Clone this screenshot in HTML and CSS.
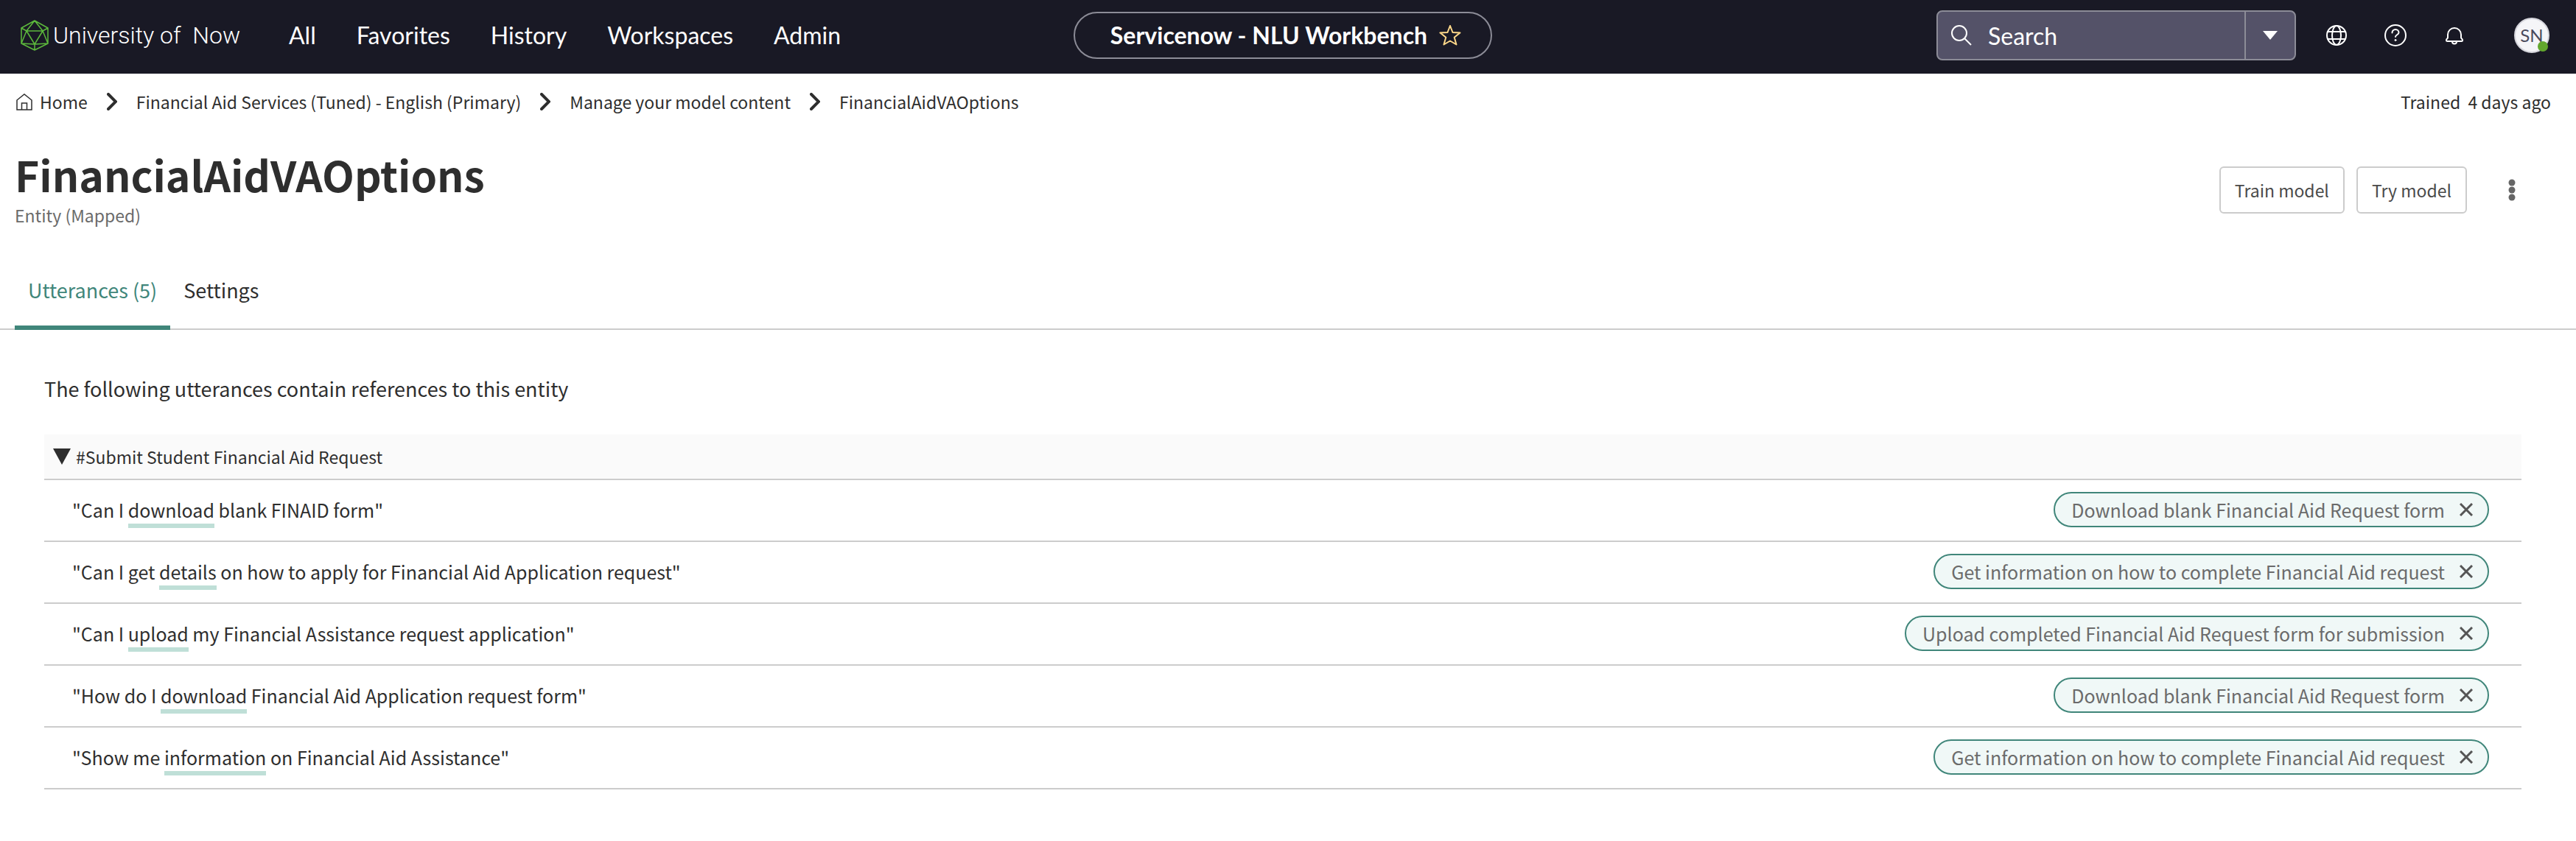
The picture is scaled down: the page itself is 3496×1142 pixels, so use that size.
FILE: index.html
```html
<!DOCTYPE html>
<html lang="en">
<head>
<meta charset="utf-8">
<title>FinancialAidVAOptions - NLU Workbench</title>
<link rel="stylesheet" href="styles.css">
</head>
<body>
<header class="topbar">
  <a class="brand" href="#">
    <svg class="brand-icon" viewBox="0 0 38 42" aria-hidden="true"><path d="M19 1 37 11V32L19 41 1 32V11ZM8 15H30L19 33ZM19 1 8 15 1 11M19 1 30 15 37 11M8 15 1 32 19 33 37 32 30 15M19 33V41"/></svg>
    <span>University of&nbsp; Now</span>
  </a>
  <nav class="menu" aria-label="Main">
    <a href="#">All</a><a href="#">Favorites</a><a href="#">History</a><a href="#">Workspaces</a><a href="#">Admin</a>
  </nav>
  <div class="context">
    <span>Servicenow - NLU Workbench</span>
    <button class="icon-button" type="button" aria-label="Add to favorites"><svg class="star" viewBox="0 0 30 28" aria-hidden="true"><path d="M15 1 18.500 10 28.500 10.500 20.700 16.800 23.500 26.500 15 21.500 6.500 26.500 9.300 16.800 1.500 10.500 11.500 10Z"/></svg></button>
  </div>
  <div class="tools">
    <div class="search">
      <svg class="search-icon" viewBox="0 0 28 28" aria-hidden="true"><circle cx="11" cy="11" r="10"/><path d="M18 18 27 27"/></svg>
      <input type="text" placeholder="Search" aria-label="Search">
      <button class="search-scope" type="button" aria-label="Search scope"><svg viewBox="0 0 20 12" aria-hidden="true"><path d="M0 0H20L10 12Z"/></svg></button>
    </div>
    <button class="icon-button" type="button" aria-label="Language"><svg class="tool-icon" viewBox="0 0 30 30" aria-hidden="true"><circle cx="15" cy="15" r="13"/><ellipse cx="15" cy="15" rx="6" ry="13"/><path d="M3 10H27M3 20H27"/></svg></button>
    <button class="icon-button" type="button" aria-label="Help"><svg class="tool-icon" viewBox="0 0 30 30" aria-hidden="true"><circle cx="15" cy="15" r="14"/><path d="M10.500 11.500C10.500 9 12.500 7 15 7S19.500 9 19.500 11.200C19.500 14 15 14.500 15 17"/><circle class="dot" cx="15" cy="21.500" r="1"/></svg></button>
    <button class="icon-button" type="button" aria-label="Notifications"><svg class="tool-icon" viewBox="0 0 30 30" aria-hidden="true"><path d="M6 18V14A9 9 0 0 1 24 14V18C24 19.500 26 19.500 26 21.500C26 22.500 25.500 23 24.500 23H5.500C4.500 23 4 22.500 4 21.500C4 19.500 6 19.500 6 18ZM12 23.500A3 3 0 0 0 18 23.500"/></svg></button>
    <button class="avatar" type="button" aria-label="User menu">SN<span class="presence"></span></button>
  </div>
</header>
<main>
  <div class="crumb-row">
    <nav class="crumbs" aria-label="Breadcrumb">
      <a class="home" href="#"><svg class="home-icon" viewBox="0 0 22 24" aria-hidden="true"><path d="M1 10 11 2 21 10V23H1ZM7.500 23V14H14.500V23"/></svg>Home</a>
      <svg class="chevron" viewBox="0 0 14 24" aria-hidden="true"><path d="M2 2 12 12 2 22"/></svg>
      <a href="#">Financial Aid Services (Tuned) - English (Primary)</a>
      <svg class="chevron" viewBox="0 0 14 24" aria-hidden="true"><path d="M2 2 12 12 2 22"/></svg>
      <a href="#">Manage your model content</a>
      <svg class="chevron" viewBox="0 0 14 24" aria-hidden="true"><path d="M2 2 12 12 2 22"/></svg>
      <span>FinancialAidVAOptions</span>
    </nav>
    <span>Trained&nbsp; 4 days ago</span>
  </div>
  <div class="title-row">
    <div>
      <h1>FinancialAidVAOptions</h1>
      <p class="subtitle">Entity (Mapped)</p>
    </div>
    <div class="actions">
      <button class="button" type="button">Train model</button>
      <button class="button" type="button">Try model</button>
      <button class="more" type="button" aria-label="More options"><svg viewBox="0 0 10 30" aria-hidden="true"><circle cx="5" cy="5" r="4.500"/><circle cx="5" cy="15" r="4.500"/><circle cx="5" cy="25" r="4.500"/></svg></button>
    </div>
  </div>
  <div class="tabs" role="tablist">
    <button class="tab selected" type="button" role="tab" aria-selected="true">Utterances (5)</button>
    <button class="tab" type="button" role="tab" aria-selected="false">Settings</button>
  </div>
  <section class="panel">
    <h2>The following utterances contain references to this entity</h2>
    <table>
      <thead><tr><th colspan="2"><button class="group" type="button" aria-expanded="true"><svg viewBox="0 0 24 22" aria-hidden="true"><path d="M0 0H24L12 22Z"/></svg>#Submit Student Financial Aid Request</button></th></tr></thead>
      <tbody>
        <tr><td>"Can I <mark>download</mark> blank FINAID form"</td><td><span class="tag">Download blank Financial Aid Request form<button type="button" aria-label="Remove"><svg viewBox="0 0 18 18" aria-hidden="true"><path d="M1 1 17 17M17 1 1 17"/></svg></button></span></td></tr>
        <tr><td>"Can I get <mark>details</mark> on how to apply for Financial Aid Application request"</td><td><span class="tag">Get information on how to complete Financial Aid request<button type="button" aria-label="Remove"><svg viewBox="0 0 18 18" aria-hidden="true"><path d="M1 1 17 17M17 1 1 17"/></svg></button></span></td></tr>
        <tr><td>"Can I <mark>upload</mark> my Financial Assistance request application"</td><td><span class="tag">Upload completed Financial Aid Request form for submission<button type="button" aria-label="Remove"><svg viewBox="0 0 18 18" aria-hidden="true"><path d="M1 1 17 17M17 1 1 17"/></svg></button></span></td></tr>
        <tr><td>"How do I <mark>download</mark> Financial Aid Application request form"</td><td><span class="tag">Download blank Financial Aid Request form<button type="button" aria-label="Remove"><svg viewBox="0 0 18 18" aria-hidden="true"><path d="M1 1 17 17M17 1 1 17"/></svg></button></span></td></tr>
        <tr><td>"Show me <mark>information</mark> on Financial Aid Assistance"</td><td><span class="tag">Get information on how to complete Financial Aid request<button type="button" aria-label="Remove"><svg viewBox="0 0 18 18" aria-hidden="true"><path d="M1 1 17 17M17 1 1 17"/></svg></button></span></td></tr>
      </tbody>
    </table>
  </section>
</main>
</body>
</html>
```
FILE: styles.css
```css
* { box-sizing: border-box; }
body { margin: 0; background: #fff; color: #2e2e2e; font: 23px/36px "Noto Sans CJK SC", "Open Sans", sans-serif; }
a { color: inherit; text-decoration: none; }
button { font: inherit; color: inherit; background: none; border: 0; padding: 0; }
svg { display: block; fill: none; flex: none; }
h1, h2, p { margin: 0; }

.topbar { display: grid; grid-template-columns: 1fr auto 1fr; align-items: center; grid-template-areas: "left center right"; height: 100px; padding: 0 36px 4px 22px; background: #191925; color: #fff; font: 400 32px/40px Lato, sans-serif; }
.brand { grid-area: left; display: flex; align-items: center; gap: 6px; padding-left: 6px; font: 300 32px/40px Roboto, sans-serif; }
.brand-icon { width: 38px; height: 42px; stroke: #5cb83c; stroke-width: 1.5; stroke-linejoin: round; }
.menu { grid-area: left; display: flex; gap: 55px; padding-left: 370px; }
.context { grid-area: center; display: flex; align-items: center; gap: 16px; height: 64px; padding: 0 40px 0 48px; border: 2px solid #8c8c97; border-radius: 32px; font-weight: 700; }
.star { width: 30px; height: 28px; stroke: #ffd98a; stroke-width: 2; stroke-linejoin: round; }
.tools { grid-area: right; justify-self: end; display: flex; align-items: center; }
.search { display: flex; align-items: center; width: 488px; height: 68px; margin-right: 40px; padding-left: 18px; background: #545268; border: 2px solid #8c8c97; border-radius: 8px; }
.search-icon { width: 28px; height: 28px; stroke: #fff; stroke-width: 2; }
.search input { flex: 1; min-width: 0; height: 100%; padding: 0 0 0 22px; border: 0; background: none; color: #fff; font: inherit; }
.search input::placeholder { color: #fff; opacity: 1; }
.search-scope { display: grid; place-items: center; width: 68px; height: 100%; border-left: 2px solid #8c8c97; }
.search-scope svg { width: 20px; height: 12px; fill: #fff; }
.tools > .icon-button { margin-right: 50px; }
.tool-icon { width: 30px; height: 30px; stroke: #fff; stroke-width: 2; stroke-linejoin: round; stroke-linecap: round; }
.tool-icon .dot { fill: #fff; stroke-width: 1; }
.avatar { position: relative; width: 48px; height: 48px; margin-left: 16px; border: 2px solid #d5d5dc; border-radius: 50%; background: #f5f5f8; color: #4a4a5c; font: 24px/44px Lato, sans-serif; }
.presence { position: absolute; right: 0; bottom: 0; width: 14px; height: 14px; border-radius: 50%; background: #62a72e; }

.crumb-row { display: flex; justify-content: space-between; padding: 20px 34px 0 22px; }
.crumbs { display: flex; align-items: center; gap: 26px; }
.home { display: flex; align-items: center; gap: 10px; }
.home-icon { width: 22px; height: 24px; stroke: #2e2e2e; stroke-width: 1.5; }
.chevron { width: 14px; height: 24px; stroke: #2e2e2e; stroke-width: 4; stroke-linecap: round; }

.title-row { display: flex; justify-content: space-between; padding: 42px 82px 0 20px; }
h1 { font-size: 57px; line-height: 76px; font-weight: 700; }
.subtitle { color: #6b6b6b; }
.actions { display: flex; align-items: center; gap: 16px; height: 64px; margin-top: 28px; }
.button { height: 64px; padding: 0 19px; border: 2px solid #ccc; border-radius: 6px; color: #4a4a4a; }
.more { margin-left: 40px; }
.more svg { width: 10px; height: 30px; fill: #666; }

.tabs { display: flex; height: 114px; margin-top: 24px; padding-left: 20px; border-bottom: 2px solid #ccc; }
.tab { height: 114px; padding: 12px 18px 0; border-bottom: 6px solid transparent; font-size: 27px; }
.tab.selected { color: #40867a; border-color: #40867a; }

.panel { padding: 60px 74px 0 60px; }
h2 { margin-bottom: 42px; font-size: 27px; line-height: 40px; font-weight: 400; }
table { width: 100%; border-collapse: separate; border-spacing: 0; font-size: 25px; }
th { height: 62px; padding: 0 12px; background: #fafafa; border-bottom: 2px solid #ccc; font-size: 23px; font-weight: 400; text-align: left; }
.group { display: flex; align-items: center; gap: 7px; }
.group svg { width: 24px; height: 22px; fill: #2e2e2e; }
td { height: 84px; padding: 0 44px 2px 38px; border-bottom: 2px solid #ccc; }
mark { padding-bottom: 1px; background: none; color: inherit; border-bottom: 6px solid #bfdfd7; }
.tag { display: flex; align-items: center; gap: 20px; width: fit-content; height: 48px; margin-left: auto; padding: 0 20px 0 22px; border: 2px solid #40867a; border-radius: 24px; background: #f0f8f7; color: #6b6b6b; }
.tag svg { width: 18px; height: 18px; stroke: #555; stroke-width: 3; }
```
